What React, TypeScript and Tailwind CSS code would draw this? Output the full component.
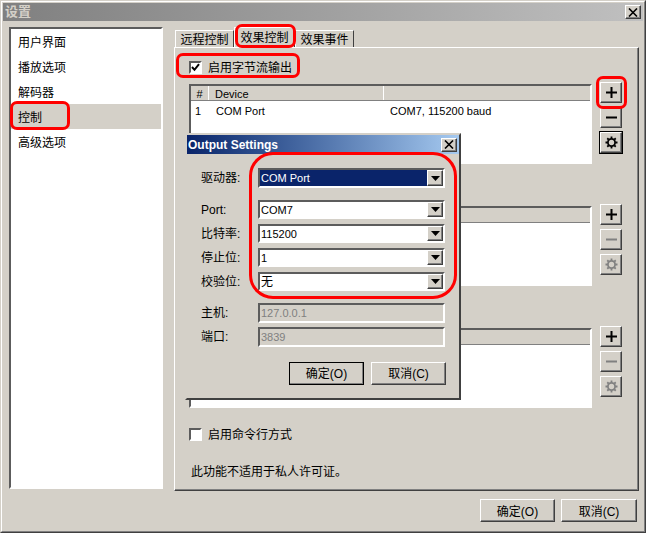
import * as React from "react";

const FONT = "font-['Liberation_Sans','Noto_Sans_CJK_SC',sans-serif] text-[12px] leading-[16px] text-black";
const RAISED =
  "border border-t-white border-l-white border-r-[#404040] border-b-[#404040] bg-[#d4d0c8] shadow-[inset_-1px_-1px_0_#808080]";
const SUNKEN =
  "border-2 border-t-[#5c5c5c] border-l-[#5c5c5c] border-r-white border-b-white";

const NAV = ["用户界面", "播放选项", "解码器", "控制", "高级选项"];

function CloseGlyph() {
  return (
    <svg width="10" height="9" viewBox="0 0 10 9" fill="none" stroke="#000" strokeWidth="1.6">
      <path d="M1 0.5 L9 8.5 M9 0.5 L1 8.5" />
    </svg>
  );
}

function CloseButton({ className }: { className: string }) {
  return <div className={`${RAISED} ${className} flex items-center justify-center`}><CloseGlyph /></div>;
}

function Arrow() {
  return (
    <svg width="9" height="5" viewBox="0 0 9 5">
      <path d="M0 0 H9 L4.5 5 Z" fill="#000" />
    </svg>
  );
}

function Gear({ color }: { color: string }) {
  const teeth = [0, 45, 90, 135];
  return (
    <svg width="13" height="13" viewBox="0 0 13 13" fill="none" stroke={color}>
      <circle cx="6.5" cy="6.5" r="3.6" strokeWidth="1.8" />
      {teeth.map((a) => (
        <path key={a} d="M6.5 0.5 V12.5" strokeWidth="1.8" strokeDasharray="2 8" transform={`rotate(${a} 6.5 6.5)`} />
      ))}
    </svg>
  );
}

function ToolButton({ kind, enabled, focus }: { kind: "plus" | "minus" | "gear"; enabled: boolean; focus?: boolean }) {
  const color = enabled ? "#000" : "#808080";
  return (
    <div className={`${RAISED} w-[22px] h-[21px] flex items-center justify-center ${focus ? "outline outline-1 outline-black" : ""}`}>
      {kind === "plus" && (
        <svg width="11" height="11" viewBox="0 0 11 11" stroke={color} strokeWidth="2">
          <path d="M5.5 0 V11 M0 5.5 H11" />
        </svg>
      )}
      {kind === "minus" && (
        <svg width="11" height="3" viewBox="0 0 11 3" stroke={color} strokeWidth="2">
          <path d="M0 1.5 H11" />
        </svg>
      )}
      {kind === "gear" && <Gear color={color} />}
    </div>
  );
}

function Checkbox({ checked }: { checked?: boolean }) {
  return (
    <div className={`${SUNKEN} w-[13px] h-[13px] shrink-0 bg-white flex items-center justify-center`}>
      {checked && (
        <svg width="9" height="9" viewBox="0 0 9 9" fill="none" stroke="#000" strokeWidth="2">
          <path d="M1 4 L3.5 6.8 L8 1.2" />
        </svg>
      )}
    </div>
  );
}

function DeviceGroup({ first }: { first?: boolean }) {
  return (
    <div className="flex">
      <div className={`${SUNKEN} mt-[2px] w-[403px] h-[80px] bg-white`}>
        <div className="flex h-[15px] bg-[#d4d0c8] border-b border-[#808080] text-[11px]">
          <div className="w-[18px] border-r border-white text-center">{first && "#"}</div>
          <div className="w-[175px] border-r border-white pl-[6px]">{first && "Device"}</div>
          <div className="flex-1" />
        </div>
        {first && (
          <div className="flex h-[20px] items-center text-[11px]">
            <div className="w-[25px] pl-[4px]">1</div>
            <div className="w-[174px]">COM Port</div>
            <div>COM7, 115200 baud</div>
          </div>
        )}
      </div>
      <div className="ml-[8px] flex flex-col gap-[4px]">
        <ToolButton kind="plus" enabled />
        <ToolButton kind="minus" enabled={!!first} />
        <ToolButton kind="gear" enabled={!!first} focus={first} />
      </div>
    </div>
  );
}

function Combo({ value, tall, selected }: { value: string; tall?: boolean; selected?: boolean }) {
  return (
    <div className={`${SUNKEN} w-[187px] ${tall ? "h-[20px]" : "h-[19px]"} bg-white flex items-center`}>
      <div className={`flex-1 h-full flex items-center pl-[1px] ${value === "无" ? "" : "text-[11px]"} ${selected ? "bg-[#0a246a] text-white" : ""}`}>{value}</div>
      <div className={`${RAISED} w-[16px] h-full shrink-0 flex items-center justify-center`}>
        <Arrow />
      </div>
    </div>
  );
}

function DialogButton({ label, primary, w }: { label: string; primary?: boolean; w: string }) {
  return (
    <div className={`${RAISED} ${w} h-[23px] flex items-center justify-center ${primary ? "outline outline-1 -outline-offset-1 outline-black" : ""}`}>
      {label}
    </div>
  );
}

function Field({ label, children }: { label: string; children: React.ReactNode }) {
  return (
    <div className="flex items-center">
      <div className="w-[57px]">{label}</div>
      {children}
    </div>
  );
}

function OutputDialog() {
  return (
    <div className="absolute left-[184px] top-[132px] w-[276px] h-[267px] bg-[#d4d0c8] border-2 border-t-[#d4d0c8] border-l-[#d4d0c8] border-r-[#404040] border-b-[#404040]">
      <div className="h-[19px] flex items-center justify-between pl-[1px] pr-[2px] bg-gradient-to-r from-[#0a246a] to-[#a6caf0]">
        <span className="font-bold text-white">Output Settings</span>
        <CloseButton className="w-[16px] h-[14px]" />
      </div>
      <div className="pl-[14px] pt-[14px]">
        <Field label="驱动器:"><Combo value="COM Port" tall selected /></Field>
        <div className="mt-[12px] flex flex-col gap-[5px]">
          <Field label="Port:"><Combo value="COM7" /></Field>
          <Field label="比特率:"><Combo value="115200" /></Field>
          <Field label="停止位:"><Combo value="1" /></Field>
          <Field label="校验位:"><Combo value="无" /></Field>
        </div>
        <div className="mt-[12px] flex flex-col gap-[4px]">
          {[["主机:", "127.0.0.1"], ["端口:", "3839"]].map(([label, value]) => (
            <Field key={label} label={label}>
              <div className={`${SUNKEN} w-[187px] h-[20px] flex items-center pl-[1px] text-[11px] text-[#808080]`}>{value}</div>
            </Field>
          ))}
        </div>
      </div>
      <div className="mt-[15px] pr-[13px] flex justify-end gap-[7px]">
        <DialogButton label="确定(O)" primary w="w-[75px]" />
        <DialogButton label="取消(C)" w="w-[75px]" />
      </div>
    </div>
  );
}

function Highlight({ className }: { className: string }) {
  return <div className={`absolute border-[3px] border-[#ff0000] pointer-events-none ${className}`} />;
}

export default function App() {
  return (
    <div className={`${FONT} relative w-[646px] h-[533px] bg-[#d4d0c8] border border-t-[#d4d0c8] border-l-[#d4d0c8] border-r-[#404040] border-b-[#404040]`}>
      <div className="h-full border border-t-white border-l-white border-r-[#808080] border-b-[#808080] p-px flex flex-col">
        <div className="h-[18px] shrink-0 flex items-center justify-between pl-[2px] pr-[2px] bg-gradient-to-r from-[#808080] to-[#c0c0c0]">
          <span className="font-bold text-[13px] text-[#d4d0c8]">设置</span>
          <CloseButton className="w-[16px] h-[14px]" />
        </div>

        <div className="flex">
          <div className={`${SUNKEN} mt-[6px] ml-[6px] w-[154px] h-[462px] bg-white`}>
            {NAV.map((item) => (
              <div key={item} className={`h-[25px] flex items-center pl-[7px] pt-[2px] ${item === "控制" ? "bg-[#d4d0c8]" : ""}`}>
                {item}
              </div>
            ))}
          </div>

          <div className="ml-[11px] w-[465px]">
            <div className="h-[26px] flex items-end pl-[1px]">
              <div className="w-[59px] h-[17px] border border-b-0 border-t-white border-l-white border-r-[#404040] text-center leading-[18px]">远程控制</div>
              <div className="w-[61px] h-[20px] border border-b-0 border-t-white border-l-white border-r-[#404040] text-center leading-[20px]">效果控制</div>
              <div className="w-[59px] h-[17px] border border-b-0 border-t-white border-l-white border-r-[#404040] text-center leading-[18px]">效果事件</div>
            </div>
            <div className="h-[444px] border border-t-white border-l-white border-r-[#404040] border-b-[#404040] shadow-[inset_-1px_-1px_0_#808080] pl-[14px] pt-[13px]">
              <div className="flex items-center h-[13px] gap-[6px]">
                <Checkbox checked />
                <span>启用字节流输出</span>
              </div>
              <div className="mt-[8px] flex flex-col gap-[40px]">
                <DeviceGroup first />
                <DeviceGroup />
                <DeviceGroup />
              </div>
              <div className="mt-[20px] flex items-center h-[13px] gap-[6px]">
                <Checkbox />
                <span>启用命令行方式</span>
              </div>
              <div className="mt-[23px] ml-[2px]">此功能不适用于私人许可证。</div>
            </div>
          </div>
        </div>

        <div className="mt-[8px] pr-[6px] flex justify-end gap-[6px]">
          <DialogButton label="确定(O)" w="w-[75px] pt-[2px]" />
          <DialogButton label="取消(C)" w="w-[76px] pt-[2px]" />
        </div>
      </div>

      <OutputDialog />

      <Highlight className="left-[234px] top-[23px] w-[61px] h-[24px] rounded-[7px]" />
      <Highlight className="left-[175px] top-[52px] w-[124px] h-[25px] rounded-[7px]" />
      <Highlight className="left-[9px] top-[100px] w-[60px] h-[29px] rounded-[7px]" />
      <Highlight className="left-[595px] top-[75px] w-[31px] h-[33px] rounded-[7px]" />
      <Highlight className="left-[248px] top-[151px] w-[208px] h-[147px] rounded-[24px]" />
    </div>
  );
}
